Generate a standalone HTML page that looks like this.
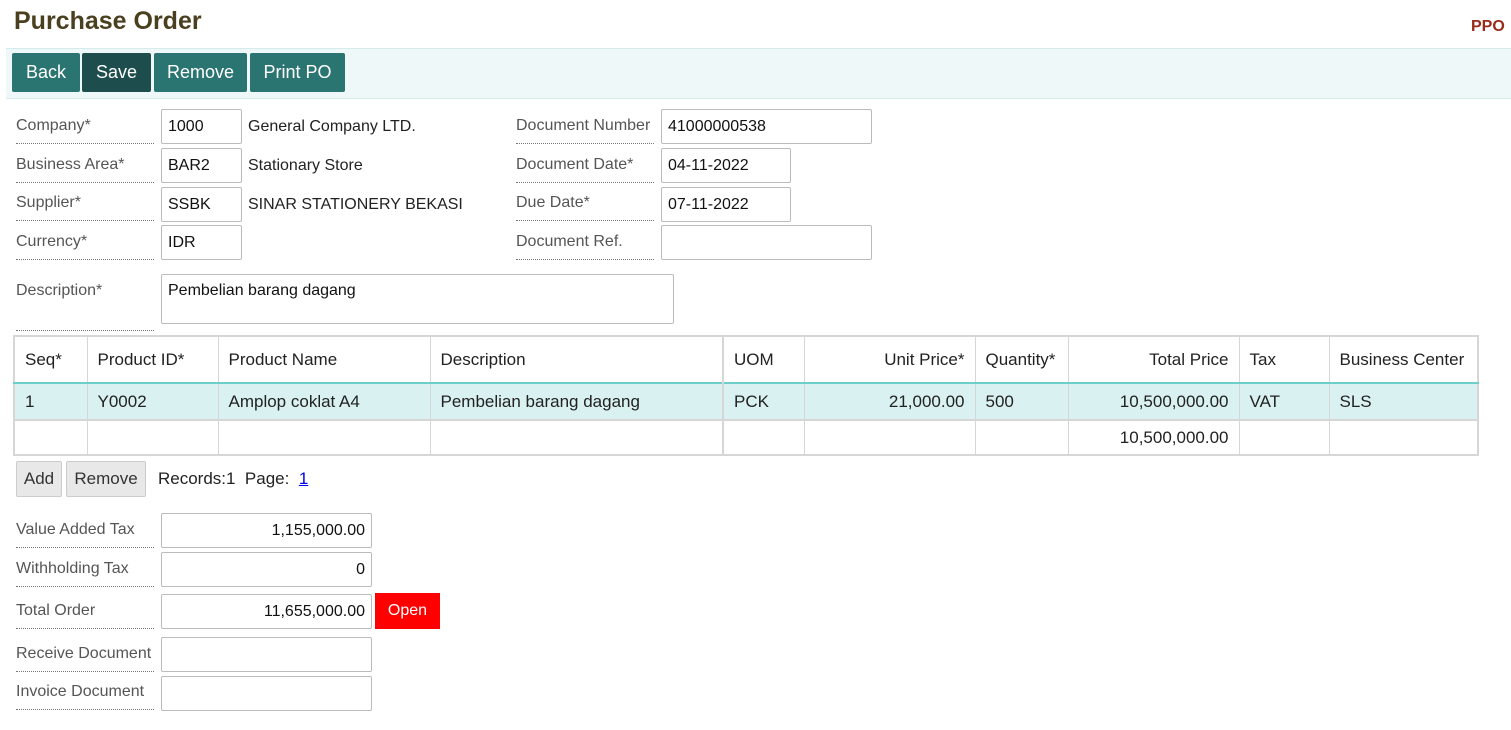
<!DOCTYPE html>
<html><head><meta charset="utf-8"><style>
*{box-sizing:border-box;margin:0;padding:0}
body{width:1511px;height:730px;background:#fff;font-family:"Liberation Sans",Arial,sans-serif;position:relative;overflow:hidden;color:#222}
.a{position:absolute}
h1{position:absolute;left:14px;top:7px;font-size:25px;font-weight:bold;color:#4a3f1e}
.ppo{left:1471px;top:18px;font-size:16px;font-weight:bold;color:#9a2a1a}
.bar{left:6px;top:48px;width:1505px;height:51px;background:#eef8f8;border-top:1px solid #d6ecec;border-bottom:1px solid #d6ecec}
.btn{position:absolute;top:53px;height:39px;background:#2a7471;color:#fff;font-size:18px;line-height:39px;text-align:center;border-radius:2px}
.lbl{position:absolute;left:16px;width:138px;height:35px;font-size:16px;color:#555;border-bottom:1px dotted #777;padding-top:8px;white-space:nowrap}
.lbl.r{left:516px}
.in{position:absolute;height:35px;border:1px solid #bbb;border-radius:2px;font-size:16px;padding:8px 6px;background:#fff;color:#111}
.txt{position:absolute;font-size:16px;color:#222}
table{position:absolute;left:13px;top:335px;border-collapse:collapse;font-size:17px;border:2px solid #d6d6d6}
td{border:1px solid #d6d6d6;padding:0 10px;color:#222;white-space:nowrap}
tr.h td{height:47px}
tr.h{border-bottom:2px solid #6ccfcc}
tr.d td{height:37px;background:#d9f1f1}
tr.d{border-bottom:2px solid #d6d6d6}
tr.e td{height:35px}
.rt{text-align:right}
.gb{position:absolute;top:461px;height:36px;background:#e8e8e8;border:1px solid #ccc;border-radius:2px;font-size:17px;line-height:34px;text-align:center;color:#333}
.num{text-align:right}
</style></head><body>
<h1>Purchase Order</h1>
<div class="a ppo">PPO</div>
<div class="a bar"></div>
<div class="btn" style="left:12px;width:68px">Back</div>
<div class="btn" style="left:82px;width:69px;background:#1e4d4d">Save</div>
<div class="btn" style="left:154px;width:93px">Remove</div>
<div class="btn" style="left:250px;width:95px">Print PO</div>

<div class="lbl" style="top:109px">Company*</div>
<div class="in" style="left:161px;top:109px;width:81px">1000</div>
<div class="txt" style="left:248px;top:118px">General Company LTD.</div>
<div class="lbl" style="top:148px">Business Area*</div>
<div class="in" style="left:161px;top:148px;width:81px">BAR2</div>
<div class="txt" style="left:248px;top:157px">Stationary Store</div>
<div class="lbl" style="top:186px">Supplier*</div>
<div class="in" style="left:161px;top:187px;width:81px">SSBK</div>
<div class="txt" style="left:248px;top:196px">SINAR STATIONERY BEKASI</div>
<div class="lbl" style="top:225px">Currency*</div>
<div class="in" style="left:161px;top:225px;width:81px">IDR</div>

<div class="lbl r" style="top:109px">Document Number</div>
<div class="in" style="left:661px;top:109px;width:211px">41000000538</div>
<div class="lbl r" style="top:148px">Document Date*</div>
<div class="in" style="left:661px;top:148px;width:130px">04-11-2022</div>
<div class="lbl r" style="top:186px">Due Date*</div>
<div class="in" style="left:661px;top:187px;width:130px">07-11-2022</div>
<div class="lbl r" style="top:225px">Document Ref.</div>
<div class="in" style="left:661px;top:225px;width:211px"></div>

<div class="lbl" style="top:274px;height:57px">Description*</div>
<div class="in" style="left:161px;top:274px;width:513px;height:50px;padding-top:7px">Pembelian barang dagang</div>

<table>
<tr class="h"><td style="width:73px">Seq*</td><td style="width:131px">Product ID*</td><td style="width:212px">Product Name</td><td style="width:293px;border-right:2px solid #d6d6d6">Description</td><td style="width:81px">UOM</td><td class="rt" style="width:171px">Unit Price*</td><td style="width:93px">Quantity*</td><td class="rt" style="width:171px">Total Price</td><td style="width:90px">Tax</td><td style="width:149px">Business Center</td></tr>
<tr class="d"><td>1</td><td>Y0002</td><td>Amplop coklat A4</td><td style="border-right:2px solid #d6d6d6">Pembelian barang dagang</td><td>PCK</td><td class="rt">21,000.00</td><td>500</td><td class="rt">10,500,000.00</td><td>VAT</td><td>SLS</td></tr>
<tr class="e"><td></td><td></td><td></td><td style="border-right:2px solid #d6d6d6"></td><td></td><td></td><td></td><td class="rt">10,500,000.00</td><td></td><td></td></tr>
</table>

<div class="gb" style="left:16px;width:46px">Add</div>
<div class="gb" style="left:66px;width:80px">Remove</div>
<div class="txt" style="left:158px;top:469px;font-size:17px">Records:1&nbsp; Page:&nbsp; <span style="color:#00e;text-decoration:underline">1</span></div>

<div class="lbl" style="top:513px">Value Added Tax</div>
<div class="in num" style="left:161px;top:513px;width:211px">1,155,000.00</div>
<div class="lbl" style="top:552px">Withholding Tax</div>
<div class="in num" style="left:161px;top:552px;width:211px">0</div>
<div class="lbl" style="top:594px">Total Order</div>
<div class="in num" style="left:161px;top:594px;width:211px">11,655,000.00</div>
<div class="a" style="left:375px;top:593px;width:65px;height:36px;background:#f00;color:#fff;font-size:16px;line-height:36px;text-align:center">Open</div>
<div class="lbl" style="top:637px">Receive Document</div>
<div class="in" style="left:161px;top:637px;width:211px"></div>
<div class="lbl" style="top:675px">Invoice Document</div>
<div class="in" style="left:161px;top:676px;width:211px"></div>
</body></html>
